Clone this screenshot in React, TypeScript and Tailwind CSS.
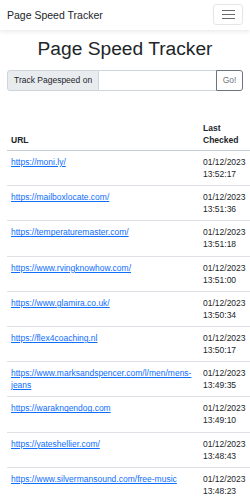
import React from 'react';

interface Row {
  url: string;
  date: string;
  time: string;
}

const rows: Row[] = [
  { url: 'https://moni.ly/', date: '01/12/2023', time: '13:52:17' },
  { url: 'https://mailboxlocate.com/', date: '01/12/2023', time: '13:51:36' },
  { url: 'https://temperaturemaster.com/', date: '01/12/2023', time: '13:51:18' },
  { url: 'https://www.rvingknowhow.com/', date: '01/12/2023', time: '13:51:00' },
  { url: 'https://www.glamira.co.uk/', date: '01/12/2023', time: '13:50:34' },
  { url: 'https://flex4coaching.nl', date: '01/12/2023', time: '13:50:17' },
  { url: 'https://www.marksandspencer.com/l/men/mens-jeans', date: '01/12/2023', time: '13:49:35' },
  { url: 'https://waraknqendog.com', date: '01/12/2023', time: '13:49:10' },
  { url: 'https://yateshellier.com/', date: '01/12/2023', time: '13:48:43' },
  { url: 'https://www.silvermansound.com/free-music', date: '01/12/2023', time: '13:48:23' },
];

export default function App() {
  return (
    <div className="w-[250px] min-h-[498px] bg-white text-[#212529] font-['Liberation_Sans',Arial,sans-serif] overflow-hidden">
      {/* navbar */}
      <nav className="h-[30px] flex items-center justify-between pl-[7px] pr-[7px] bg-white shadow-[0_2px_4px_rgba(0,0,0,0.08)]">
        <span className="text-[10.5px] leading-[15px] text-[#212529]">Page Speed Tracker</span>
        <button className="w-[30px] h-[21px] mt-[-1px] border border-[rgba(0,0,0,0.1)] rounded-[3px] flex flex-col items-center justify-center gap-[3.3px]">
          <span className="block w-[13px] h-px bg-[#6b6b6b]" />
          <span className="block w-[13px] h-px bg-[#6b6b6b]" />
          <span className="block w-[13px] h-px bg-[#6b6b6b]" />
        </button>
      </nav>

      <div className="pl-[7px]">
        <h1 className="mt-[7px] pr-[7px] text-center text-[19.2px] leading-[23px]">Page Speed Tracker</h1>

        <div className="mt-[10px] mr-[7px] flex h-[21px] text-[8.5px]">
          <span className="flex items-center px-[6px] bg-[#e9ecef] border border-[#ced4da] rounded-l-[3px]">
            Track Pagespeed on
          </span>
          <input className="flex-1 min-w-0 border-y border-[#ced4da] bg-white outline-none" />
          <button className="w-[27px] border border-[#6c757d] rounded-r-[3px] text-[#6c757d]">Go!</button>
        </div>

        <table className="mt-[26px] w-[243px] table-fixed border-collapse text-[8.5px] leading-[12px]">
          <thead>
            <tr className="border-b border-[#c9ced3]">
              <th className="w-[192px] px-[4px] py-[4.5px] text-left align-bottom font-bold">URL</th>
              <th className="px-[4px] py-[4.5px] text-left align-bottom font-bold">
                Last
                <br />
                Checked
              </th>
            </tr>
          </thead>
          <tbody>
            {rows.map((r) => (
              <tr key={r.url} className="border-b border-[#dee2e6]">
                <td className="px-[4px] py-[5.1px] align-top break-words">
                  <a href="#" className="text-[#0d6efd] underline">{r.url}</a>
                </td>
                <td className="px-[4px] py-[5.1px] align-top">
                  {r.date}
                  <br />
                  {r.time}
                </td>
              </tr>
            ))}
          </tbody>
        </table>
      </div>
    </div>
  );
}
